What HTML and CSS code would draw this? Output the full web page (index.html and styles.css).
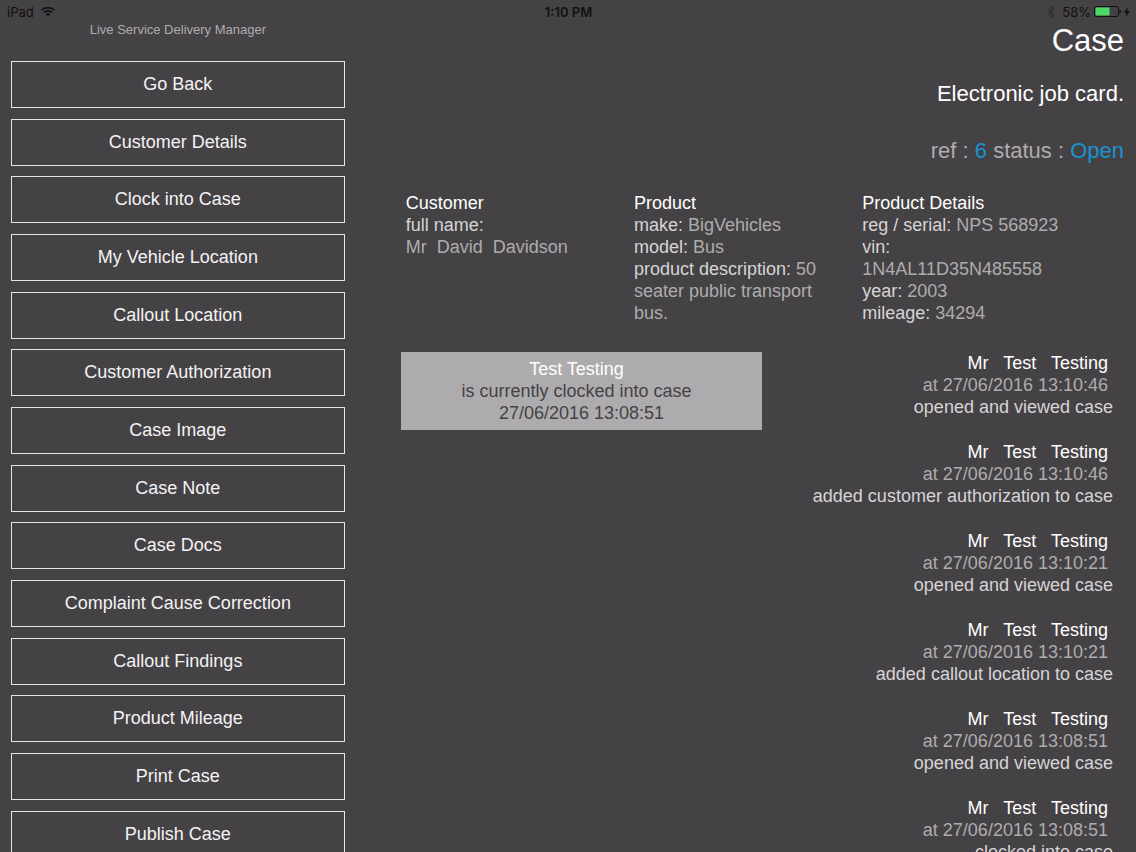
FILE: index.html
```html
<!DOCTYPE html>
<html lang="en">
<head>
    <meta charset="UTF-8">
    <meta name="viewport" content="width=device-width, initial-scale=1.0">
    <title>Live Service Delivery Manager - Case</title>
    <link rel="stylesheet" href="styles.css">
</head>
<body>
    <div class="status-bar">
        <div class="status-left">
            <span>iPad</span>
            <svg width="14" height="11" viewBox="0 0 14 11" fill="none" stroke="#111" stroke-width="1.7">
                <path d="M0.8 4.2 A8.8 8.8 0 0 1 13.2 4.2"/>
                <path d="M3 6.5 A5.7 5.7 0 0 1 11 6.5"/>
                <path d="M7 10.6 L4.9 8.4 A3 3 0 0 1 9.1 8.4 Z" fill="#111" stroke="none"/>
            </svg>
        </div>
        <div class="status-time">1:10 PM</div>
        <div class="status-right">
            <svg class="bluetooth" width="8" height="13" viewBox="0 0 8 13" fill="none" stroke="#2b292b" stroke-width="1">
                <path d="M0.5 3.3 L7.2 9.3 L4 12.3 V0.7 L7.2 3.7 L0.5 9.7"/>
            </svg>
            <span>58%</span>
            <svg width="27" height="11" viewBox="0 0 27 11">
                <rect x="0.5" y="0.5" width="24" height="10" rx="2" fill="none" stroke="#111"/>
                <rect x="1.5" y="1.5" width="14" height="8" rx="1" fill="#4cd964"/>
                <path d="M25.5 3.5 Q27 4 27 5.5 Q27 7 25.5 7.5 Z" fill="#111"/>
            </svg>
            <svg width="6" height="10" viewBox="0 0 6 10">
                <path d="M4 0 L0 5.7 H2.6 L1.8 10 L6 4.1 H3.3 Z" fill="#111"/>
            </svg>
        </div>
    </div>

    <div class="page">
        <nav class="sidebar">
            <p class="brand">Live Service Delivery Manager</p>
            <ul class="menu">
                <li><button type="button">Go Back</button></li>
                <li><button type="button">Customer Details</button></li>
                <li><button type="button">Clock into Case</button></li>
                <li><button type="button">My Vehicle Location</button></li>
                <li><button type="button">Callout Location</button></li>
                <li><button type="button">Customer Authorization</button></li>
                <li><button type="button">Case Image</button></li>
                <li><button type="button">Case Note</button></li>
                <li><button type="button">Case Docs</button></li>
                <li><button type="button">Complaint Cause Correction</button></li>
                <li><button type="button">Callout Findings</button></li>
                <li><button type="button">Product Mileage</button></li>
                <li><button type="button">Print Case</button></li>
                <li><button type="button">Publish Case</button></li>
            </ul>
        </nav>

        <main class="content">
            <h1>Case</h1>
            <p class="subtitle">Electronic job card.</p>
            <p class="ref">ref : <span class="blue">6</span> status : <span class="blue">Open</span></p>

            <div class="details">
                <section>
                    <h2>Customer</h2>
                    <p>full name:</p>
                    <p class="value">Mr&nbsp; David&nbsp; Davidson</p>
                </section>
                <section>
                    <h2>Product</h2>
                    <p>make: <span class="value">BigVehicles</span></p>
                    <p>model: <span class="value">Bus</span></p>
                    <p>product description: <span class="value">50 seater public transport bus.</span></p>
                </section>
                <section>
                    <h2>Product Details</h2>
                    <p>reg / serial: <span class="value">NPS 568923</span></p>
                    <p>vin: <span class="value">1N4AL11D35N485558</span></p>
                    <p>year: <span class="value">2003</span></p>
                    <p>mileage: <span class="value">34294</span></p>
                </section>
            </div>

            <div class="activity">
                <div class="clocked">
                    <p class="name">Test Testing&nbsp;&nbsp;</p>
                    <p>is currently clocked into case&nbsp;&nbsp;</p>
                    <p>27/06/2016 13:08:51</p>
                </div>
                <ul class="history">
                    <li>
                        <p class="name">Mr &nbsp; Test &nbsp; Testing&nbsp;</p>
                        <p class="value">at 27/06/2016 13:10:46&nbsp;</p>
                        <p>opened and viewed case</p>
                    </li>
                    <li>
                        <p class="name">Mr &nbsp; Test &nbsp; Testing&nbsp;</p>
                        <p class="value">at 27/06/2016 13:10:46&nbsp;</p>
                        <p>added customer authorization to case</p>
                    </li>
                    <li>
                        <p class="name">Mr &nbsp; Test &nbsp; Testing&nbsp;</p>
                        <p class="value">at 27/06/2016 13:10:21&nbsp;</p>
                        <p>opened and viewed case</p>
                    </li>
                    <li>
                        <p class="name">Mr &nbsp; Test &nbsp; Testing&nbsp;</p>
                        <p class="value">at 27/06/2016 13:10:21&nbsp;</p>
                        <p>added callout location to case</p>
                    </li>
                    <li>
                        <p class="name">Mr &nbsp; Test &nbsp; Testing&nbsp;</p>
                        <p class="value">at 27/06/2016 13:08:51&nbsp;</p>
                        <p>opened and viewed case</p>
                    </li>
                    <li>
                        <p class="name">Mr &nbsp; Test &nbsp; Testing&nbsp;</p>
                        <p class="value">at 27/06/2016 13:08:51&nbsp;</p>
                        <p>clocked into case</p>
                    </li>
                </ul>
            </div>
        </main>
    </div>
</body>
</html>
```
FILE: styles.css
```css
* {
    box-sizing: border-box;
}
body {
    margin: 0;
    background-color: #454245;
    color: #d6d4d6;
    font-family: "Liberation Sans", Arial, sans-serif;
    font-size: 18px;
    line-height: 22px;
}
h1, h2, p, ul {
    margin: 0;
    padding: 0;
    font-weight: normal;
}
ul {
    list-style: none;
}

/* status bar */
.status-bar {
    display: grid;
    grid-template-columns: 1fr auto 1fr;
    align-items: center;
    height: 23px;
    padding: 0 6px 0 7px;
    color: #111;
    font-family: Inter, sans-serif;
    font-size: 13px;
}
.status-left,
.status-right {
    display: flex;
    align-items: center;
    gap: 7px;
}
.status-right {
    justify-content: flex-end;
    gap: 3px;
}
.bluetooth {
    margin-right: 4px;
}
.status-time {
    font-weight: 600;
}

.page {
    display: flex;
}

/* menu */
.sidebar {
    width: 31.4%;
    padding: 0 12px 0 11px;
}
.brand {
    height: 38px;
    line-height: 14px;
    font-size: 13px;
    text-align: center;
    color: #aeacae;
}
.menu li {
    margin-bottom: 3.2%;
}
.menu button {
    display: block;
    width: 100%;
    height: 47px;
    padding: 0;
    border: 1px solid #e6e4e6;
    background: none;
    color: #f4f2f4;
    font-family: inherit;
    font-size: 18px;
    cursor: pointer;
}

/* case */
.content {
    flex: 1;
    padding: 0 12px 0 44px;
}
h1 {
    font-size: 31px;
    line-height: 36px;
    text-align: right;
    color: #fff;
}
.subtitle,
.ref {
    margin-top: 22px;
    font-size: 22px;
    line-height: 26px;
    text-align: right;
}
.subtitle {
    color: #fff;
}
.ref {
    margin-top: 31px;
    color: #aeacae;
}
.blue {
    color: #1a94cf;
}
.value {
    color: #aeacae;
}
.details {
    display: grid;
    grid-template-columns: repeat(3, 32%);
    margin-top: 28px;
    padding: 0 5px;
}
.details section {
    padding-right: 24px;
}
h2 {
    font-size: 18px;
    color: #fff;
}
.activity {
    display: grid;
    grid-template-columns: 1fr 1fr;
    align-items: start;
    margin-top: 28px;
}
.clocked {
    padding: 6px;
    background-color: #aeabae;
    color: #454245;
    text-align: center;
}
.name {
    color: #fff;
}
.history {
    padding-right: 11px;
    text-align: right;
}
.history li {
    margin-bottom: 23px;
}
```
